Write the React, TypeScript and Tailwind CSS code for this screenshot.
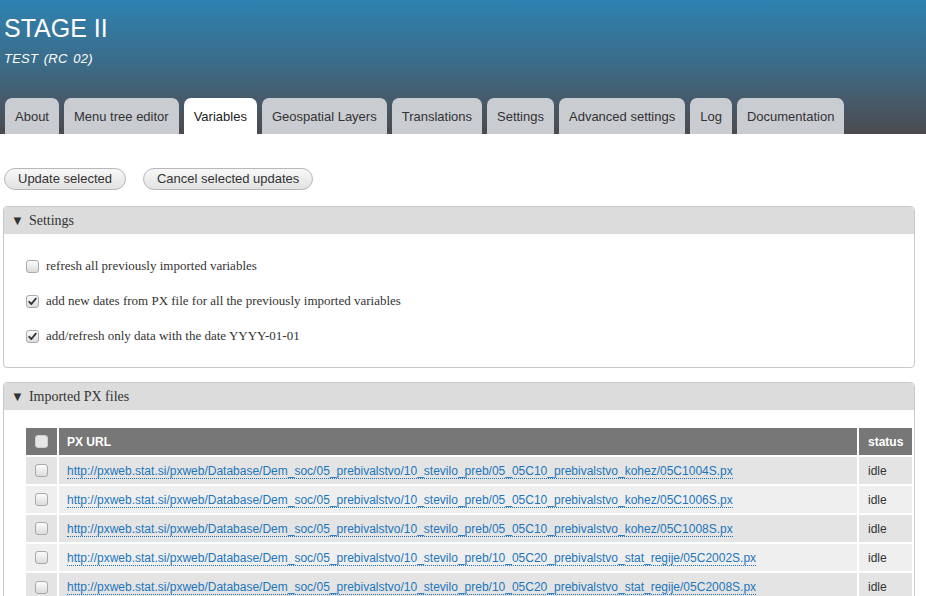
import type { ReactNode } from 'react'

const TABS = [
  'About',
  'Menu tree editor',
  'Variables',
  'Geospatial Layers',
  'Translations',
  'Settings',
  'Advanced settings',
  'Log',
  'Documentation',
]

const BASE = 'http://pxweb.stat.si/pxweb/Database/Dem_soc/05_prebivalstvo/10_stevilo_preb/'

const FILES = [
  '05_05C10_prebivalstvo_kohez/05C1004S.px',
  '05_05C10_prebivalstvo_kohez/05C1006S.px',
  '05_05C10_prebivalstvo_kohez/05C1008S.px',
  '10_05C20_prebivalstvo_stat_regije/05C2002S.px',
  '10_05C20_prebivalstvo_stat_regije/05C2008S.px',
]

function Box({ checked = false, light = false }: { checked?: boolean; light?: boolean }) {
  return (
    <span
      className={`inline-flex h-[13px] w-[13px] shrink-0 items-center justify-center rounded-[3px] border ${
        light ? 'border-[#cfcfcf] bg-[#e6e6e6]' : 'border-[#a9a9a9] bg-linear-to-b from-[#fcfcfc] to-[#dcdcdc]'
      }`}
    >
      {checked && (
        <svg width="9" height="9" viewBox="0 0 9 9">
          <path d="M1.2 4.8 L3.4 7 L7.8 1.6" fill="none" stroke="#333" strokeWidth="1.8" strokeLinecap="round" strokeLinejoin="round" />
        </svg>
      )}
    </span>
  )
}

function Panel({ title, children, className = '' }: { title: string; children: ReactNode; className?: string }) {
  return (
    <div className={`rounded-[4px] border border-[#c8c8c8] ${className}`}>
      <div className="flex h-[27px] items-center gap-[5px] rounded-t-[4px] bg-[#dcdcdc] pl-[7px] font-['Liberation_Serif',serif] text-[14px] text-[#333]">
        <span className="text-[13px] leading-none">▼</span>
        {title}
      </div>
      {children}
    </div>
  )
}

export default function App() {
  return (
    <div className="min-h-[596px] w-[926px] overflow-hidden bg-white font-['Liberation_Sans',Arial,sans-serif] text-[#333]">
      <header className="flex h-[134px] flex-col bg-linear-to-b from-[#2d82b1] via-[#3b6a86] to-[#4b4a4f] px-[4px] text-white">
        <h1 className="pt-[12px] text-[25px] leading-[32px]">STAGE II</h1>
        <p className="mt-[7px] text-[13px] italic leading-[16px] tracking-[0.2px] [word-spacing:2px]">TEST (RC 02)</p>
        <nav className="mt-auto flex gap-[5px] pl-[1px]">
          {TABS.map((t) => (
            <div
              key={t}
              className={`flex h-[36px] items-center rounded-t-[7px] px-[10px] pt-[1px] text-[13px] ${
                t === 'Variables' ? 'bg-white text-[#222]' : 'bg-[#c9ccd0] text-[#333]'
              }`}
            >
              {t}
            </div>
          ))}
        </nav>
      </header>

      <div className="px-[3px] pt-[34px]">
        <div className="flex gap-[17px] pl-[1px]">
          <button type="button" className="h-[22px] rounded-full border border-[#b8b8b8] bg-linear-to-b from-[#f8f8f8] to-[#e2e2e2] px-[13px] text-[13px] text-[#333]">
            Update selected
          </button>
          <button type="button" className="h-[22px] rounded-full border border-[#b8b8b8] bg-linear-to-b from-[#f8f8f8] to-[#e2e2e2] px-[13px] text-[13px] text-[#333]">
            Cancel selected updates
          </button>
        </div>

        <Panel title="Settings" className="mt-[16px] w-[912px]">
          <div className="flex flex-col gap-[21px] pb-[24px] pl-[22px] pt-[25px] font-['Liberation_Serif',serif] text-[13px] text-[#333]">
            {[
              ['refresh all previously imported variables', false],
              ['add new dates from PX file for all the previously imported variables', true],
              ['add/refresh only data with the date YYYY-01-01', true],
            ].map(([label, on]) => (
              <label key={label as string} className="flex h-[14px] items-center gap-[7px]">
                <Box checked={on as boolean} />
                {label}
              </label>
            ))}
          </div>
        </Panel>

        <Panel title="Imported PX files" className="mt-[14px] w-[912px]">
          <div className="pl-[22px] pt-[18px]">
            <table className="w-[886px] border-collapse text-[12px]">
              <thead>
                <tr className="h-[28px] bg-[#777] text-white">
                  <th className="w-[32px] border-r-2 border-white">
                    <div className="flex justify-center">
                      <Box light />
                    </div>
                  </th>
                  <th className="border-r-2 border-white pl-[8px] text-left font-bold">PX URL</th>
                  <th className="w-[54px] pl-[9px] text-left font-bold">status</th>
                </tr>
              </thead>
              <tbody>
                {FILES.map((f, i) => (
                  <tr key={f} className={`h-[29px] border-t-2 border-white ${i % 2 === 0 ? 'bg-[#e4e4e4]' : 'bg-[#efefef]'}`}>
                    <td className="border-r-2 border-white">
                      <div className="flex justify-center">
                        <Box />
                      </div>
                    </td>
                    <td className="border-r-2 border-white pl-[8px]">
                      <a className="border-b border-dotted border-[#1a73b8] text-[#1c76bc]">{BASE + f}</a>
                    </td>
                    <td className="pl-[9px] text-[#333]">idle</td>
                  </tr>
                ))}
              </tbody>
            </table>
          </div>
        </Panel>
      </div>
    </div>
  )
}
